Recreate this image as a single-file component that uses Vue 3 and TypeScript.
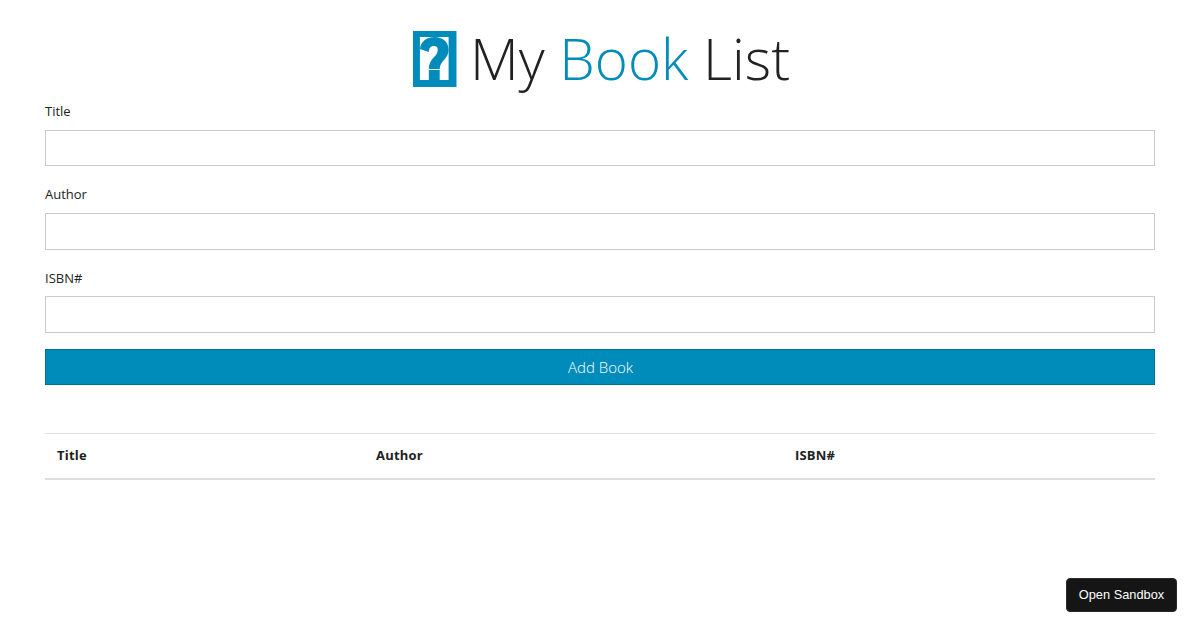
<script setup lang="ts">
const fields: string[] = ['Title', 'Author', 'ISBN#']
const columns: string[] = ['Title', 'Author', 'ISBN#']
</script>

<template>
  <main class="page">
    <h1 class="heading">
      <svg class="logo" width="43.5" height="56" viewBox="0 0 44 56" preserveAspectRatio="none" aria-hidden="true">
        <rect width="44" height="56" fill="#008cba" />
        <rect x="7" y="6" width="29" height="43" fill="#fff" />
        <path fill="#008cba" d="M7 18C8 10 14 6 22 6C30 6 36 11 36 19C36 28 27 30 27 38H16C16 27 25 26 25 19C25 16 24 15 21 15C18 15 16 17 16 21ZM16 39H27V49H16Z" />
      </svg>
      <span class="title">My <span class="accent">Book</span> List</span>
    </h1>
    <form class="form" @submit.prevent>
      <label v-for="field in fields" :key="field" class="field">
        <span class="label">{{ field }}</span>
        <input class="input" type="text" />
      </label>
      <button class="add" type="submit">Add Book</button>
    </form>
    <table class="table">
      <thead>
        <tr>
          <th v-for="column in columns" :key="column">{{ column }}</th>
        </tr>
      </thead>
    </table>
    <button class="sandbox" type="button">Open Sandbox</button>
  </main>
</template>

<style>
html, body { margin: 0; background: #fff; }
</style>

<style scoped>
.page {
  box-sizing: border-box;
  height: 630px;
  padding: 0 45px;
  font-family: "Open Sans", sans-serif;
  color: #222;
  overflow: hidden;
}
.heading {
  display: flex;
  align-items: center;
  justify-content: center;
  gap: 13px;
  margin: 0;
  padding: 18px 0 0 3.5px;
  height: 81.6px;
  font-size: 56.5px;
  font-weight: 300;
  line-height: 82px;
  color: #222;
}
.title { padding-top: 1px; }
.logo { flex: none; }
.accent { color: #008cba; }
.form { display: flex; flex-direction: column; }
.field { display: flex; flex-direction: column; height: 83.2px; }
.label { font-size: 13px; line-height: 23.4px; height: 30px; color: #222; }
.field:nth-child(3) .label { line-height: 24.4px; }
.input {
  box-sizing: border-box;
  height: 36.8px;
  border: 1px solid #cacaca;
  background: #fff;
  padding: 0 8px;
  margin: 0;
}
.add {
  box-sizing: border-box;
  height: 36px;
  border: 1px solid #007095;
  background: #008cba;
  color: #fff;
  font-family: "Open Sans", sans-serif;
  font-size: 15px;
  font-weight: 300;
  padding: 0 0 0 1px;
}
.table {
  width: 100%;
  margin-top: 48px;
  border-collapse: collapse;
  table-layout: fixed;
}
.table th {
  height: 45px;
  padding: 0 12px 1px;
  box-sizing: border-box;
  text-align: left;
  font-size: 13px;
  letter-spacing: 0.2px;
  font-weight: 700;
  color: #222;
  border-top: 1px solid #e1e1e1;
  border-bottom: 2px solid #ddd;
}
.table th:nth-child(1) { width: 319px; }
.table th:nth-child(2) { width: 419px; }
.sandbox {
  position: fixed;
  right: 23px;
  bottom: 18px;
  width: 111px;
  height: 34px;
  border: 1px solid #2a2a2a;
  border-radius: 4px;
  background: #151515;
  color: #fff;
  font-family: "Liberation Sans", Arial, sans-serif;
  font-size: 12.8px;
  padding: 0 0 2px;
}
</style>
